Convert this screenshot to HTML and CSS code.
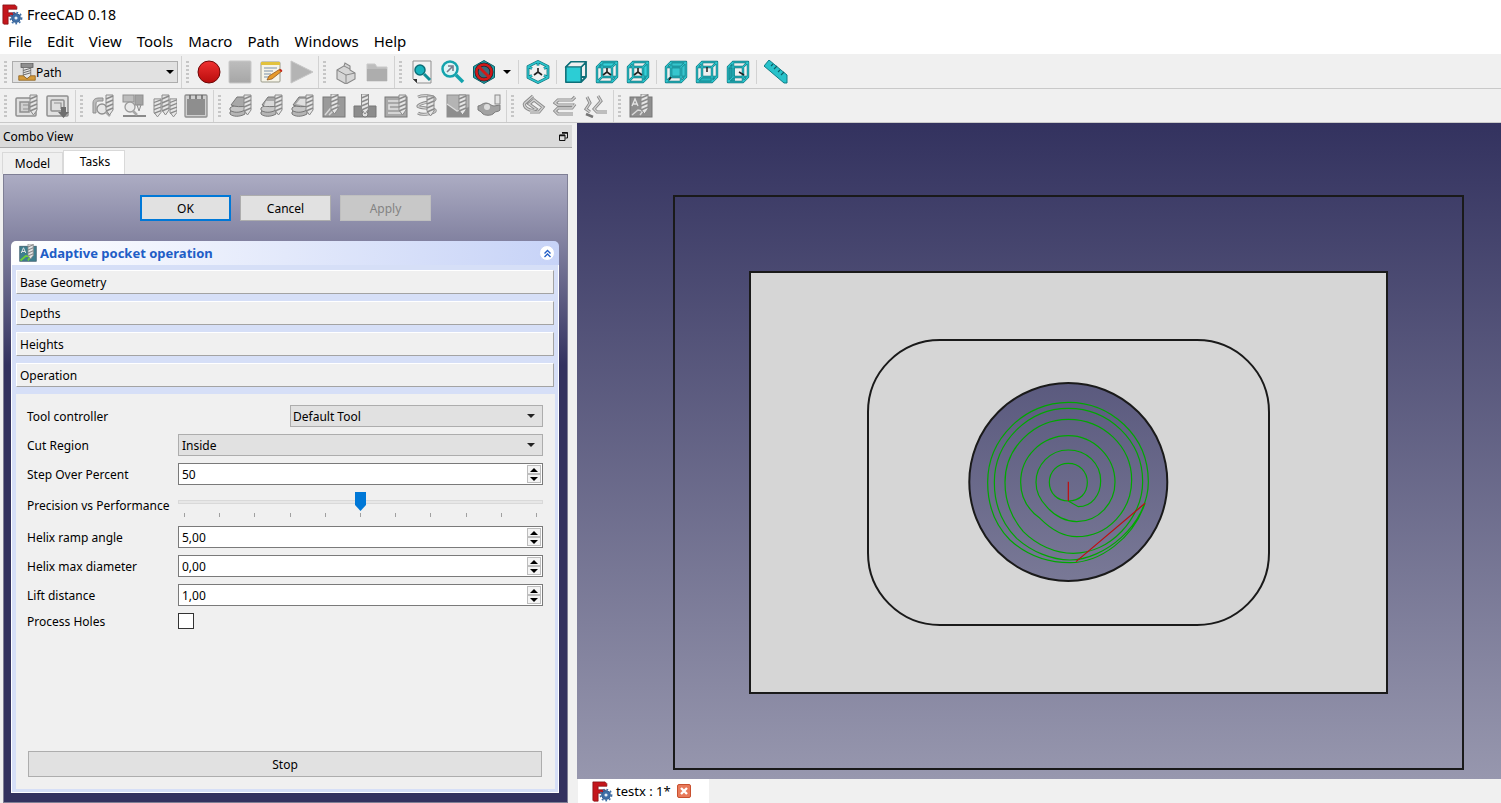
FILE: index.html
```html
<!DOCTYPE html>
<html lang="en">
<head>
<meta charset="utf-8">
<title>FreeCAD 0.18</title>
<link rel="stylesheet" href="styles.css">
</head>
<body>
<svg class="defs" width="0" height="0" aria-hidden="true">
  <defs>
    <g id="bit"><path d="M15 1h7v15l-3.500 5-3.500-5z" fill="#e6e6e6" stroke="#8a8a8a"/><path d="M15 5l7-3M15 9l7-3M15 13l7-3M15 17l7-3" stroke="#8a8a8a" stroke-width="1.400" fill="none"/></g>
    <path id="wire" d="M2 7h15v15H2zM7 2h15v15H7zM2 7l5-5M17 7l5-5M17 22l5-5M2 22l5-5" fill="none" stroke-linejoin="round"/>
    <path id="hexw" d="M12 1.500l10 5v11l-10 5-10-5v-11zM12 1.500v4M2 6.500l4 2M22 6.500l-4 2M2 17.500l4-2M22 17.500l-4-2" fill="none" stroke-linejoin="round"/>
    <path id="triad" d="M12 12v-4M12 12l-4 3M12 12l4 3" stroke="#222" stroke-width="1.600" fill="none"/>
    <g id="stack"><path d="M1 18c3-3 10-3 15-1v3c-5 3-12 3-15 0z" fill="#b5b5b5" stroke="#777"/><path d="M1 14c3-3 10-3 15-1v3c-5 3-12 3-15 0z" fill="#c6c6c6" stroke="#777"/><path d="M2 11l6-8h9v9c-5 1-10 1-15-1z" fill="#a8a8a8" stroke="#777"/></g>
    <g id="gear"><circle cx="16" cy="16" r="5" fill="#3f6fa8" stroke="#2c5688" stroke-width="1"/><circle cx="16" cy="16" r="6.300" fill="none" stroke="#3f6fa8" stroke-width="2" stroke-dasharray="2 2.200"/><circle cx="16" cy="16" r="1.800" fill="#e8eef6"/></g>
    <g id="flogo"><path d="M1 1h14l2 2v3H7v4h8v4H7v9H2l-1-1z" fill="#c4161c" stroke="#7d0c10" stroke-width=".8"/><use href="#gear"/></g>

    <linearGradient id="red" x1="0" y1="0" x2="0" y2="1"><stop offset="0" stop-color="#f03030"/><stop offset="1" stop-color="#b80c0c"/></linearGradient>
    <linearGradient id="sky" gradientUnits="userSpaceOnUse" x1="0" y1="123" x2="0" y2="779"><stop offset="0" stop-color="#33325f"/><stop offset="1" stop-color="#9797ae"/></linearGradient>
    <linearGradient id="stopg" x1="0" y1="0" x2="0" y2="1"><stop offset="0" stop-color="#bdbdbd"/><stop offset="1" stop-color="#a6a6a6"/></linearGradient>

    <symbol id="i-rec" viewBox="0 0 24 24"><circle cx="12" cy="12" r="11" fill="url(#red)" stroke="#6e0707" stroke-width="1"/></symbol>
    <symbol id="i-stop" viewBox="0 0 24 24"><rect x="1" y="1" width="22" height="22" rx="1" fill="url(#stopg)" stroke="#c8c8c8"/></symbol>
    <symbol id="i-macro" viewBox="0 0 24 24"><rect x="2" y="2" width="19" height="20" rx="1" fill="#f6f4e8" stroke="#9a9a8a"/><path d="M2 2h19v3H2z" fill="#e2c23c"/><path d="M5 8h13M5 11h9M5 14h7M5 17h5" stroke="#7a90a8" stroke-width="1"/><path d="M8 20l2-4 11-7 2 2-10 8z" fill="#e69a2a" stroke="#8a4a10" stroke-width=".7"/><path d="M20 10l2-1 1.500 2-1.500 1z" fill="#c8281e"/></symbol>
    <symbol id="i-play" viewBox="0 0 24 24"><path d="M1 1l22 11L1 23z" fill="#b4b4b4" stroke="#c6c6c6"/></symbol>
    <symbol id="i-part" viewBox="0 0 24 24"><path d="M3 10l7-4 1-3 5 3v4l5 3v6l-9 5-9-5z" fill="#d6d6d6" stroke="#888" stroke-width="1.100"/><path d="M3 10l9 5 9-2M12 15v8M10 6l6 3" fill="none" stroke="#888"/></symbol>
    <symbol id="i-folder" viewBox="0 0 24 24"><path d="M2 4h8l2 3h10v14H2z" fill="#bdbdbd" stroke="#c9c9c9"/><path d="M2 9h20v12H2z" fill="#adadad"/></symbol>
    <symbol id="i-fit" viewBox="0 0 24 24"><path d="M3 1h18v22H7l-4-4z" fill="#f2f2f2" stroke="#8f8f8f"/><path d="M3 19l4 4v-4z" fill="#333"/><circle cx="10" cy="10" r="5" fill="#18b3bd" stroke="#0c6f78" stroke-width="1.500"/><path d="M14 14l6 6" stroke="#0e8d96" stroke-width="3"/></symbol>
    <symbol id="i-sel" viewBox="0 0 24 24"><circle cx="9" cy="9" r="7.500" fill="#dff5f6" stroke="#14a3ad" stroke-width="2.500"/><path d="M15 15l7 7" stroke="#14a3ad" stroke-width="3.500"/><path d="M6 12l5-5M7 6h5v5" stroke="#7a7a8a" stroke-width="1.600" fill="none"/></symbol>
    <symbol id="i-style" viewBox="0 0 24 24"><path d="M12 .5l10.500 6v11L12 23.500 1.500 17.500v-11z" fill="#23a6ae" stroke="#0d5c64" stroke-width="1"/><circle cx="12" cy="12" r="7.500" fill="#3c6a7a" stroke="#1c2530" stroke-width="4"/><circle cx="12" cy="12" r="7.500" fill="none" stroke="#d01818" stroke-width="2.600"/><path d="M7 7l10 10" stroke="#d01818" stroke-width="2.800"/></symbol>
    <symbol id="i-home" viewBox="0 0 24 24"><use href="#hexw" stroke="#0f6f78" stroke-width="2.800"/><use href="#hexw" stroke="#2cc4cc" stroke-width="1.400"/><use href="#triad"/></symbol>
    <symbol id="i-front" viewBox="0 0 24 24"><path d="M17 7l5-5v15l-5 5z" fill="#f0f0f0"/><use href="#wire" stroke="#0f6f78" stroke-width="1.800"/><path d="M2 7l5-5h15l-5 5z" fill="#f0f0f0" stroke="#0f6f78" stroke-width="1.200"/><path d="M2 7h15v15H2z" fill="#2ccdd5" stroke="#0f6f78" stroke-width="1.200"/></symbol>
    <symbol id="i-top" viewBox="0 0 24 24"><path d="M2 7l5-5h15l-5 5z" fill="#36d2da"/><use href="#wire" stroke="#0f6f78" stroke-width="2.400"/><use href="#wire" stroke="#2cc4cc" stroke-width="1.200"/><use href="#triad"/></symbol>
    <symbol id="i-right" viewBox="0 0 24 24"><path d="M17 7l5-5v15l-5 5z" fill="#36d2da"/><use href="#wire" stroke="#0f6f78" stroke-width="2.400"/><use href="#wire" stroke="#2cc4cc" stroke-width="1.200"/><use href="#triad"/></symbol>
    <symbol id="i-rear" viewBox="0 0 24 24"><path d="M7 2h15v15H7z" fill="#36c6ce"/><use href="#wire" stroke="#0f6f78" stroke-width="2.400"/><use href="#wire" stroke="#2cc4cc" stroke-width="1.200"/><path d="M7 17l-2 3" stroke="#222" stroke-width="1.500"/></symbol>
    <symbol id="i-bottom" viewBox="0 0 24 24"><path d="M2 22l5-5h15l-5 5z" fill="#25b6be"/><use href="#wire" stroke="#0f6f78" stroke-width="2.400"/><use href="#wire" stroke="#2cc4cc" stroke-width="1.200"/><path d="M12 7v5" stroke="#222" stroke-width="1.500"/></symbol>
    <symbol id="i-left" viewBox="0 0 24 24"><path d="M2 7l5-5v15l-5 5z" fill="#1e9ea6"/><path d="M2 7h7v15H2z" fill="#1ea0a8"/><use href="#wire" stroke="#0f6f78" stroke-width="2.400"/><use href="#wire" stroke="#2cc4cc" stroke-width="1.200"/><path d="M13 12l5 3" stroke="#222" stroke-width="1.500"/></symbol>
    <symbol id="i-ruler" viewBox="0 0 24 24"><path d="M5 0l18 15v8h-3L0 6z" fill="#27c2ca" stroke="#0f7d86" stroke-width="1"/><path d="M7 6l2-2M10 9l3-3M14 12l2-2M17 15l3-3" stroke="#0d5c64" stroke-width="1.100"/></symbol>

    <symbol id="g-contour" viewBox="0 0 24 24"><rect x="1" y="4" width="20" height="18" rx="1" fill="#e0e0e0" stroke="#8f8f8f" stroke-width="1.500"/><path d="M5 8h9v10H5z" fill="#cfcfcf" stroke="#8f8f8f" stroke-width="1.500"/><path d="M8 11h6v4H8" fill="none" stroke="#8f8f8f"/><use href="#bit"/></symbol>
    <symbol id="g-frame" viewBox="0 0 24 24"><rect x="1" y="2" width="21" height="20" rx="1" fill="#e0e0e0" stroke="#8f8f8f" stroke-width="1.500"/><rect x="5" y="6" width="13" height="11" rx="1" fill="#dedede" stroke="#8f8f8f" stroke-width="1.500"/><path d="M8 9h7v6" fill="none" stroke="#8f8f8f" stroke-width="1.200"/><path d="M15 13h5v5h3l-5.500 6-5.500-6h3z" fill="#6e6e6e"/></symbol>
    <symbol id="g-tool" viewBox="0 0 24 24"><path d="M2 19V9c0-4 3-5 6-5h4v3H8c-2 0-3 1-3 3v9z" fill="#bcbcbc" stroke="#8f8f8f"/><circle cx="11" cy="15" r="5" fill="#e6e6e6" stroke="#8f8f8f" stroke-width="1.300"/><path d="M15 18l4 4" stroke="#a8a8a8" stroke-width="2.500"/><use href="#bit"/></symbol>
    <symbol id="g-mach" viewBox="0 0 24 24"><rect x="1" y="1" width="11" height="7" fill="#bdbdbd" stroke="#8f8f8f"/><rect x="13" y="1" width="8" height="10" fill="#a4a4a4" stroke="#8f8f8f"/><path d="M15 11h4l-2 6z" fill="#e0e0e0" stroke="#8f8f8f"/><path d="M1 21h23v2H1z" fill="#8a8a8a"/><circle cx="8" cy="13" r="5" fill="#e9e9e9" stroke="#9a9a9a" stroke-width="1.300"/><path d="M11 17l4 4" stroke="#a8a8a8" stroke-width="2.500"/></symbol>
    <symbol id="g-bits" viewBox="0 0 24 24"><g transform="translate(-14 4) scale(1 .9)"><use href="#bit"/></g><g transform="translate(-6 0)"><use href="#bit"/></g><g transform="translate(2 4) scale(1 .9)"><use href="#bit"/></g></symbol>
    <symbol id="g-table" viewBox="0 0 24 24"><rect x="1" y="1" width="22" height="22" rx="1" fill="#cfcfcf" stroke="#8f8f8f" stroke-width="1.300"/><rect x="3" y="5" width="18" height="16" fill="#8e8e8e"/><path d="M6 1v4M12 1v4M18 1v4" stroke="#666" stroke-width="1.500"/></symbol>
    <symbol id="g-s1" viewBox="0 0 24 24"><use href="#stack"/><use href="#bit"/></symbol>
    <symbol id="g-s2" viewBox="0 0 24 24"><use href="#stack"/><path d="M6 7h8v5H4z" fill="#d8d8d8"/><use href="#bit"/></symbol>
    <symbol id="g-s3" viewBox="0 0 24 24"><use href="#stack"/><path d="M5 10l4-5h6v7z" fill="#dfdfdf"/><use href="#bit"/></symbol>
    <symbol id="g-square" viewBox="0 0 24 24"><rect x="1" y="3" width="22" height="20" fill="#9a9a9a" stroke="#777"/><path d="M3 21l10-12h3M7 21l10-10" stroke="#d8d8d8" stroke-width="1.500" fill="none"/><use href="#bit" transform="translate(-6 -1)"/></symbol>
    <symbol id="g-pocket" viewBox="0 0 24 24"><path d="M1 12h8v6h6v-6h8v11H1z" fill="#8c8c8c" stroke="#777"/><circle cx="12" cy="20" r="3" fill="#e0e0e0" stroke="#777"/><use href="#bit" transform="translate(-6.500 -1)"/></symbol>
    <symbol id="g-zig" viewBox="0 0 24 24"><rect x="1" y="3" width="22" height="20" fill="#a8a8a8" stroke="#777"/><path d="M4 7h12M16 11H5v4h11M4 19h14" stroke="#e2e2e2" stroke-width="1.600" fill="none"/><use href="#bit"/></symbol>
    <symbol id="g-helix" viewBox="0 0 24 24"><path d="M3 3c4-2 15-2 17 2 1 3-15 3-17 7-1 2 15 2 17 4 2 3-13 6-17 3" fill="none" stroke="#8a8a8a" stroke-width="3"/><path d="M3 3c4-2 15-2 17 2 1 3-15 3-17 7-1 2 15 2 17 4 2 3-13 6-17 3" fill="none" stroke="#d2d2d2" stroke-width="1.300"/><use href="#bit" transform="translate(-3 1)"/></symbol>
    <symbol id="g-wedge" viewBox="0 0 24 24"><rect x="1" y="1" width="22" height="22" fill="#b4b4b4" stroke="#909090"/><path d="M1 10l10 7 12-4v10H1z" fill="#8d8d8d"/><path d="M1 10l10 7 6-2" fill="none" stroke="#dcdcdc" stroke-width="1.200"/><use href="#bit" transform="translate(-2 0)"/></symbol>
    <symbol id="g-bowl" viewBox="0 0 24 24"><path d="M1 12c3 0 4-3 8-3s5 3 8 3l6-1v5c-1 2-5 1-6 3-2 3-10 3-12 0-1-2-3-2-4-3z" fill="#a2a2a2" stroke="#7c7c7c"/><circle cx="10" cy="13" r="3" fill="#dcdcdc"/><rect x="18" y="1" width="5" height="9" fill="#e4e4e4" stroke="#8a8a8a"/></symbol>
    <symbol id="g-clip" viewBox="0 0 24 24"><path d="M11 2l-8 7c-3 3 5 10 11 6l-7-5 5-4 9 7-4 5H8" fill="none" stroke="#8a8a8a" stroke-width="3.200"/><path d="M11 2l-8 7c-3 3 5 10 11 6l-7-5 5-4 9 7-4 5H8" fill="none" stroke="#d0d0d0" stroke-width="1.400"/></symbol>
    <symbol id="g-layers" viewBox="0 0 24 24"><path d="M22 3l-3 3H5L2 9l3 2h15M22 10l-3 4H5l-3 3 3 3h15" fill="none" stroke="#8a8a8a" stroke-width="3.200"/><path d="M22 3l-3 3H5L2 9l3 2h15M22 10l-3 4H5l-3 3 3 3h15" fill="none" stroke="#d0d0d0" stroke-width="1.400"/></symbol>
    <symbol id="g-lines" viewBox="0 0 24 24"><path d="M3 3l3 6-4 6 4 3M14 2l3 5-7 8 3 3h10" fill="none" stroke="#8a8a8a" stroke-width="3"/><path d="M3 3l3 6-4 6 4 3M14 2l3 5-7 8 3 3h10" fill="none" stroke="#d0d0d0" stroke-width="1.300"/><path d="M2 20l7 3" stroke="#777" stroke-width="2.500"/></symbol>
    <symbol id="g-adapt" viewBox="0 0 24 24"><rect x="1" y="3" width="22" height="20" fill="#8f8f8f" stroke="#777"/><path d="M3 12l3-7 3 7M4 10h4" stroke="#e4e4e4" stroke-width="1.300" fill="none"/><path d="M3 21l6-5 5 1-3 4" stroke="#d8d8d8" stroke-width="1.500" fill="none"/><use href="#bit" transform="translate(-3 -1)"/></symbol>
    <symbol id="c-adapt" viewBox="0 0 24 24"><rect x="1" y="3" width="22" height="20" fill="#3f7f8f" stroke="#3a5a6a"/><path d="M3 12l3-7 3 7M4 10h4" stroke="#e4e4e4" stroke-width="1.300" fill="none"/><path d="M2 22l7-6 6 1-3 5" stroke="#6fd03a" stroke-width="2.200" fill="none"/><use href="#bit" transform="translate(-3 -1)"/></symbol>
    <symbol id="i-mill" viewBox="0 0 24 24"><rect x="4" y="0" width="16" height="6" fill="#8f8f8f" stroke="#555"/><path d="M7 6h10v11l-5 4-5-4z" fill="#e6e6e6" stroke="#666"/><path d="M7 10l10-3M7 13l10-3M7 16l10-3" stroke="#666" stroke-width="1.300"/><path d="M1 17h6l5 4 5-4h6v6H1z" fill="#d49a3a" stroke="#8a5c1a"/></symbol>
    <symbol id="i-close" viewBox="0 0 14 14"><rect x=".5" y=".5" width="13" height="13" rx="1.500" fill="#e8795a" stroke="#c8502f"/><path d="M4 4l6 6M10 4l-6 6" stroke="#fff" stroke-width="2.400"/></symbol>
  </defs>
</svg>

<header class="titlebar">
  <svg class="applogo" viewBox="0 0 24 24"><use href="#flogo"/></svg>
  <span class="apptitle">FreeCAD 0.18</span>
</header>

<nav class="menubar">
  <span>File</span><span>Edit</span><span>View</span><span>Tools</span><span>Macro</span><span>Path</span><span>Windows</span><span>Help</span>
</nav>

<div class="tbrow first">
  <div class="grp pad3">
    <i class="grip"></i>
    <div class="wb">
      <svg class="wb-ic"><use href="#i-mill"/></svg>
      <span class="wb-text">Path</span>
      <i class="tri blk"></i>
    </div>
  </div>
  <div class="grp pad1">
    <i class="grip"></i>
    <span class="tb"><svg class="ic"><use href="#i-rec"/></svg></span>
    <span class="tb"><svg class="ic"><use href="#i-stop"/></svg></span>
    <span class="tb"><svg class="ic"><use href="#i-macro"/></svg></span>
    <span class="tb"><svg class="ic"><use href="#i-play"/></svg></span>
  </div>
  <div class="grp pad2">
    <i class="grip"></i>
    <span class="tb"><svg class="ic"><use href="#i-part"/></svg></span>
    <span class="tb"><svg class="ic"><use href="#i-folder"/></svg></span>
  </div>
  <div class="grp last">
    <i class="grip"></i>
    <span class="tb"><svg class="ic"><use href="#i-fit"/></svg></span>
    <span class="tb"><svg class="ic"><use href="#i-sel"/></svg></span>
    <span class="tb"><svg class="ic"><use href="#i-style"/></svg></span>
    <span class="tb-drop"><i class="tri blk"></i></span>
    <i class="sep"></i>
    <span class="tb"><svg class="ic"><use href="#i-home"/></svg></span>
    <i class="sep"></i>
    <span class="tb"><svg class="ic"><use href="#i-front"/></svg></span>
    <span class="tb"><svg class="ic"><use href="#i-top"/></svg></span>
    <span class="tb"><svg class="ic"><use href="#i-right"/></svg></span>
    <i class="sep"></i>
    <span class="tb"><svg class="ic"><use href="#i-rear"/></svg></span>
    <span class="tb"><svg class="ic"><use href="#i-bottom"/></svg></span>
    <span class="tb"><svg class="ic"><use href="#i-left"/></svg></span>
    <i class="sep"></i>
    <span class="tb"><svg class="ic"><use href="#i-ruler"/></svg></span>
  </div>
</div>

<div class="tbrow second">
  <div class="grp pad2">
    <i class="grip"></i>
    <span class="tb"><svg class="ic"><use href="#g-contour"/></svg></span>
    <span class="tb"><svg class="ic"><use href="#g-frame"/></svg></span>
  </div>
  <div class="grp pad2">
    <i class="grip"></i>
    <span class="tb"><svg class="ic"><use href="#g-tool"/></svg></span>
    <span class="tb"><svg class="ic"><use href="#g-mach"/></svg></span>
    <span class="tb"><svg class="ic"><use href="#g-bits"/></svg></span>
    <span class="tb"><svg class="ic"><use href="#g-table"/></svg></span>
  </div>
  <div class="grp pad2">
    <i class="grip"></i>
    <span class="tb"><svg class="ic"><use href="#g-s1"/></svg></span>
    <span class="tb"><svg class="ic"><use href="#g-s2"/></svg></span>
    <span class="tb"><svg class="ic"><use href="#g-s3"/></svg></span>
    <span class="tb"><svg class="ic"><use href="#g-square"/></svg></span>
    <span class="tb"><svg class="ic"><use href="#g-pocket"/></svg></span>
    <span class="tb"><svg class="ic"><use href="#g-zig"/></svg></span>
    <span class="tb"><svg class="ic"><use href="#g-helix"/></svg></span>
    <span class="tb"><svg class="ic"><use href="#g-wedge"/></svg></span>
    <span class="tb"><svg class="ic"><use href="#g-bowl"/></svg></span>
  </div>
  <div class="grp pad2">
    <i class="grip"></i>
    <span class="tb"><svg class="ic"><use href="#g-clip"/></svg></span>
    <span class="tb"><svg class="ic"><use href="#g-layers"/></svg></span>
    <span class="tb"><svg class="ic"><use href="#g-lines"/></svg></span>
  </div>
  <div class="grp last">
    <i class="grip"></i>
    <span class="tb"><svg class="ic"><use href="#g-adapt"/></svg></span>
  </div>
</div>

<main class="workspace">
  <aside class="dock">
    <div class="dock-head">
      <span>Combo View</span>
      <svg class="float" viewBox="0 0 9 9"><path d="M3 .5h5.500V6H6.500M.5 3H6v5.500H.5z" fill="none" stroke="#111"/><path d="M3 1h5.500M.5 3.500H6" stroke="#111" stroke-width="1.500"/></svg>
    </div>
    <div class="tabs">
      <span class="tab">Model</span>
      <span class="tab active">Tasks</span>
    </div>
    <div class="frame">
      <div class="actions">
        <button class="btn default">OK</button>
        <button class="btn">Cancel</button>
        <button class="btn disabled">Apply</button>
      </div>
      <section class="taskbox">
        <div class="taskhead">
          <svg class="taskicon"><use href="#c-adapt"/></svg>
          <span class="tasktitle">Adaptive pocket operation</span>
          <span class="chev"><svg viewBox="0 0 9 9"><path d="M1.500 4.500l3-3 3 3M1.500 8l3-3 3 3" fill="none" stroke="#215dc6" stroke-width="1.300"/></svg></span>
        </div>
        <div class="taskbody">
          <div class="section">Base Geometry</div>
          <div class="section">Depths</div>
          <div class="section">Heights</div>
          <div class="section">Operation</div>
          <div class="form">
            <div class="row">
              <label>Tool controller</label>
              <div class="combo short"><span>Default Tool</span><i class="tri"></i></div>
            </div>
            <div class="row">
              <label>Cut Region</label>
              <div class="combo"><span>Inside</span><i class="tri"></i></div>
            </div>
            <div class="row">
              <label>Step Over Percent</label>
              <div class="spin"><span>50</span><span class="arrows"><b class="up"></b><b class="down"></b></span></div>
            </div>
            <div class="row slider-row">
              <label>Precision vs Performance</label>
              <div class="slider">
                <i class="track"></i>
                <svg class="handle" viewBox="0 0 11 19"><path d="M0 0h11v13l-5.500 6L0 13z" fill="#0078d7"/></svg>
                <div class="ticks"><i></i><i></i><i></i><i></i><i></i><i></i><i></i><i></i><i></i><i></i><i></i></div>
              </div>
            </div>
            <div class="row">
              <label>Helix ramp angle</label>
              <div class="spin"><span>5,00</span><span class="arrows"><b class="up"></b><b class="down"></b></span></div>
            </div>
            <div class="row">
              <label>Helix max diameter</label>
              <div class="spin"><span>0,00</span><span class="arrows"><b class="up"></b><b class="down"></b></span></div>
            </div>
            <div class="row">
              <label>Lift distance</label>
              <div class="spin"><span>1,00</span><span class="arrows"><b class="up"></b><b class="down"></b></span></div>
            </div>
            <div class="row check-row">
              <label>Process Holes</label>
              <i class="check"></i>
            </div>
            <button class="btn stop">Stop</button>
          </div>
        </div>
      </section>
    </div>
  </aside>

  <div class="view">
    <svg class="scene" viewBox="577 123 924 656">
      <rect x="577" y="123" width="924" height="656" fill="url(#sky)"/>
      <rect x="674" y="196" width="789" height="573" fill="none" stroke="#1a1a1a" stroke-width="2"/>
      <rect x="750" y="272" width="637" height="421" fill="#d6d6d6" stroke="#1a1a1a" stroke-width="2"/>
      <rect x="868" y="340" width="401" height="285" rx="72" fill="none" stroke="#1a1a1a" stroke-width="2"/>
      <circle cx="1068.300" cy="482" r="99" fill="url(#sky)" stroke="#1a1a1a" stroke-width="2"/>
      <g transform="translate(960 375) scale(.33333)" fill="none">
        <path vector-effect="non-scaling-stroke" stroke="#00a800" stroke-width="1.200" d="M325 378C360 378 382 355 382 322C382 290 358 265 325 265C292 265 268 290 268 322C268 355 292 378 325 378L355 395C395 395 422 360 422 318C422 265 380 225 325 225C270 225 228 270 228 322C228 350 240 375 260 395C285 425 320 440 350 440C415 440 465 385 465 322C465 245 400 182 325 182C245 182 182 245 182 322C182 370 205 405 240 430C275 465 315 485 350 485C445 485 515 405 515 315C515 215 430 133 325 133C220 133 135 220 135 322C135 385 160 435 190 470C230 510 285 535 340 535C450 535 548 430 548 320C548 195 445 100 325 100C205 100 103 200 103 322C103 395 130 450 170 490C215 530 275 555 330 555C430 555 565 450 565 320C565 180 450 82 325 82C195 82 83 190 83 322C83 400 110 455 150 495C205 545 270 563 330 563C420 563 520 490 555 385"/>
        <path vector-effect="non-scaling-stroke" stroke="#c00d0d" stroke-width="1.200" d="M325 320V378M555 385L348 560"/>
      </g>
    </svg>
    <div class="doctabs">
      <div class="doctab">
        <svg class="doclogo" viewBox="0 0 24 24"><use href="#flogo"/></svg>
        <span>testx : 1*</span>
        <svg class="docclose"><use href="#i-close"/></svg>
      </div>
    </div>
  </div>
</main>
</body>
</html>
```

FILE: styles.css
```css
* { box-sizing: border-box; }
html, body { margin: 0; padding: 0; width: 1501px; height: 803px; overflow: hidden; }
body { background: #f0f0f0; color: #000; font: 12px "Noto Sans", "Open Sans", sans-serif; }
.defs { position: absolute; }
i, b { display: block; }

.titlebar { height: 28px; background: #fff; display: flex; align-items: center; padding-left: 2px; }
.applogo { width: 21px; height: 21px; margin-right: 4px; }
.apptitle { font-size: 14.200px; }

.menubar { height: 26px; background: #fff; display: flex; align-items: center; gap: 15px; padding-left: 8px; font-size: 15px; }

.tbrow { display: flex; background: #f0f0f0; border-bottom: 1px solid #c9c9c9; height: 35px; }
.tbrow.first { padding-top: 2px; }
.tbrow.second { height: 34px; padding-top: 1px; }
.grp { display: flex; align-items: center; border-right: 1px solid #d2d2d2; }
.grp.last { border-right: 0; }
.pad1 { padding-right: 1px; }
.pad2 { padding-right: 2px; }
.pad3 { padding-right: 3px; }
.grip { width: 3px; height: 22px; margin: 0 4px 0 4px; background: repeating-linear-gradient(#c6c6c6 0 2px, transparent 2px 4px); }
.tb { width: 31px; height: 24px; display: flex; justify-content: center; }
.ic { width: 24px; height: 24px; display: block; }
.tb-drop { width: 16px; display: flex; justify-content: center; }
.sep { width: 1px; height: 24px; margin: 0 3px; background: #d2d2d2; }
.tri { width: 0; height: 0; border-left: 4px solid transparent; border-right: 4px solid transparent; border-top: 4px solid #222; }
.tri.blk { border-top-color: #000; }

.wb { width: 166px; height: 22px; margin-left: 1px; background: #e1e1e1; border: 1px solid #adadad; display: flex; align-items: center; padding: 0 3px 0 5px; font-size: 12px; }
.wb-ic { width: 18px; height: 18px; }
.wb-text { flex: 1; }

.workspace { display: flex; height: 680px; }
.dock { width: 577px; padding-top: 2px; flex: none; }
.dock-head { width: 572px; height: 23px; background: #dadada; border-bottom: 1px solid #a9a9a9; padding-left: 3px; display: flex; align-items: center; justify-content: space-between; padding-right: 4px; }
.float { width: 9px; height: 9px; }
.tabs { display: flex; align-items: flex-end; height: 26px; padding-left: 2px; }
.tab { width: 61px; height: 22px; background: #f0f0f0; border: 1px solid #d9d9d9; border-bottom: 0; display: flex; align-items: center; justify-content: center; }
.tab.active { width: 62px; height: 24px; background: #fff; padding-bottom: 2px; padding-left: 2px; }
.frame { width: 565px; height: 629px; margin-left: 3px; border: 1px solid #7f7f95; display: flex; flex-direction: column; background: linear-gradient(#acacc3 0, #33325f 190px, #33325f 100%); }

.actions { display: flex; justify-content: center; gap: 9px; padding-top: 20px; height: 66px; flex: none; }
.btn { width: 91px; height: 26px; background: #e1e1e1; border: 1px solid #adadad; font: inherit; color: #000; padding: 0; }
.btn.default { border: 2px solid #0078d7; }
.btn.disabled { background: #c8c8c8; border-color: #bfbfbf; color: #838383; }
.btn.stop { width: 514px; margin: auto 0 0 1px; }

.taskbox { flex: 1; margin: 0 8px 9px 7px; display: flex; flex-direction: column; min-height: 0; }
.taskhead { height: 24px; flex: none; background: linear-gradient(90deg, #fff, #c7d3f7); border-radius: 5px 5px 0 0; display: flex; align-items: center; padding: 0 4px 0 8px; }
.taskicon { width: 18px; height: 18px; }
.tasktitle { margin-left: 3px; flex: 1; color: #215dc6; font-size: 13px; font-weight: 700; }
.chev { width: 16px; height: 16px; border-radius: 50%; background: #fff; border: 1px solid #c7d3f7; display: flex; align-items: center; justify-content: center; }
.chev svg { width: 9px; height: 9px; }
.taskbody { flex: 1; background: #d6dff7; border: 1px solid #fff; border-top: 0; padding: 5px 3px 3px 4px; display: flex; flex-direction: column; gap: 7px; min-height: 0; }
.section { height: 24px; flex: none; margin-right: 1px; background: #f0f0f0; border: 1px solid #fff; border-right-color: #a3a3a3; border-bottom-color: #a3a3a3; display: flex; align-items: center; padding-left: 3px; }
.form { flex: 1; background: #f0f0f0; padding: 11px 12px 12px 11px; display: flex; flex-direction: column; gap: 7px; min-height: 0; }
.row { display: flex; align-items: center; height: 22px; flex: none; }
.row label { width: 151px; flex: none; }
.combo, .spin { flex: 1; height: 22px; display: flex; align-items: center; justify-content: space-between; padding: 0 3px; }
.combo { background: #e1e1e1; border: 1px solid #adadad; padding-right: 7px; }
.combo.short { margin-left: 112px; padding-left: 2px; }
.spin { background: #fff; border: 1px solid #7a7a7a; padding-right: 1px; }
.arrows { width: 14px; height: 18px; display: flex; flex-direction: column; justify-content: space-between; }
.arrows b { height: 9px; background: #f4f4f4; border: 1px solid #bdbdbd; display: flex; align-items: center; justify-content: center; }
.arrows b::before { content: ""; border-left: 4px solid transparent; border-right: 4px solid transparent; }
.up::before { border-bottom: 4px solid #000; }
.down::before { border-top: 4px solid #000; }

.slider-row { height: 26px; margin-bottom: 1px; }
.slider-row label { margin-top: 1px; }
.slider { flex: 1; height: 26px; position: relative; }
.track { position: absolute; left: 0; right: 0; top: 8px; height: 4px; background: #e7e7e7; border: 1px solid #d9d9d9; }
.handle { position: absolute; left: 177px; top: 0; width: 11px; height: 19px; }
.ticks { position: absolute; left: 6px; right: 6px; top: 21px; height: 4px; display: flex; justify-content: space-between; }
.ticks i { width: 1px; height: 4px; background: #a0a0a0; }
.check-row { height: 16px; }
.check { width: 16px; height: 16px; background: #fff; border: 1px solid #333; }

.view { flex: 1; display: flex; flex-direction: column; min-width: 0; }
.scene { display: block; width: 924px; height: 656px; flex: none; }
.doctabs { flex: 1; padding-left: 1px; }
.doctab { width: 131px; height: 24px; background: #fff; display: flex; align-items: center; padding-left: 14px; font-size: 13px; }
.doclogo { width: 21px; height: 21px; margin-right: 3px; }
.docclose { width: 14px; height: 14px; margin-left: 6px; }
```
